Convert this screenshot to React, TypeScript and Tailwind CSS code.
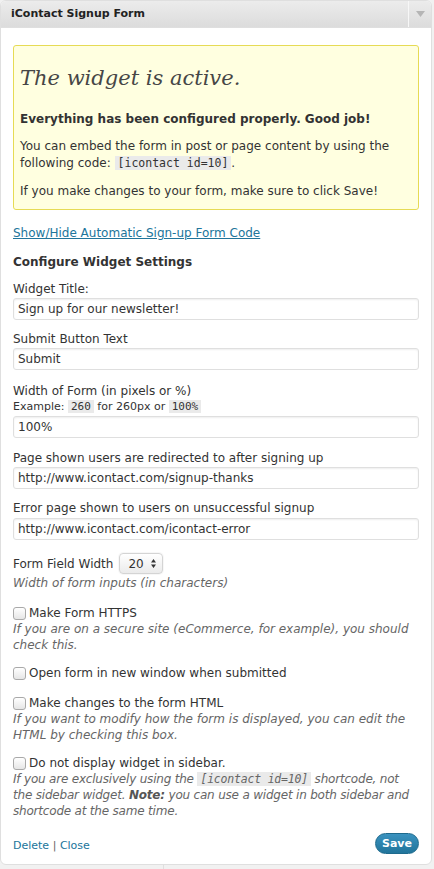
const fields = [
  { label: 'Widget Title:', value: 'Sign up for our newsletter!', mt: 'mt-[11px]' },
  { label: 'Submit Button Text', value: 'Submit', mt: 'mt-[11px]' },
];

function TextInput({ value, className = '' }: { value: string; className?: string }) {
  return (
    <input
      type="text"
      defaultValue={value}
      className={`block h-[22px] w-full rounded-[3px] border border-[#dfdfdf] bg-white px-[4px] text-[12px] text-[#333] shadow-[inset_0_1px_2px_rgba(0,0,0,0.07)] outline-none ${className}`}
    />
  );
}

function Checkbox() {
  return (
    <span className="mr-[3px] inline-block h-[13px] w-[13px] shrink-0 rounded-[3px] border border-[#a9a9a9] bg-gradient-to-b from-white to-[#e6e6e6] shadow-[0_1px_0_rgba(255,255,255,0.8)]" />
  );
}

function Code({ children, className = '' }: { children: React.ReactNode; className?: string }) {
  return (
    <code
      className={`bg-[#eaeaea] px-[3px] font-['DejaVu_Sans_Mono',monospace] text-[11.5px] ${className}`}
    >
      {children}
    </code>
  );
}

export default function App() {
  return (
    <div className="min-h-screen bg-[#f1f1f1] font-['DejaVu_Sans',sans-serif] text-[12px] leading-4 text-[#333]">
      <div className="w-[432px] overflow-hidden rounded-[6px] border border-[#dfdfdf] bg-white">
        {/* title bar */}
        <div className="flex h-[27px] border-b border-[#dfdfdf] bg-gradient-to-b from-[#ececec] to-[#dcdcdc]">
          <div className="flex flex-1 items-center pl-[10px] text-[11px] font-bold text-[#222]">
            iContact Signup Form
          </div>
          <div className="flex w-[23px] items-center justify-center border-l border-[#f7f7f7]">
            <svg width="9" height="6" viewBox="0 0 9 6">
              <path d="M0 0 H9 L4.5 6 Z" fill="#b5b5b5" />
            </svg>
          </div>
        </div>

        <div className="px-3 pb-[10px]">
          {/* notice */}
          <div className="mt-[17px] rounded-[3px] border border-[#e6db55] bg-[#ffffe0] px-[6px] pb-[9px] pt-[16px]">
            <h2 className="font-['DejaVu_Serif',serif] text-[21px] italic leading-[32px] text-[#464646]">
              The widget is active.
            </h2>
            <p className="mt-[17px] font-bold leading-[17px]">
              Everything has been configured properly. Good job!
            </p>
            <p className="mt-[10px] leading-[17px]">
              You can embed the form in post or page content by using the following code:{' '}
              <Code>[icontact id=10]</Code>.
            </p>
            <p className="mt-[11px] leading-[17px]">
              If you make changes to your form, make sure to click Save!
            </p>
          </div>

          <a href="#" className="mt-[15px] block text-[#21759b] underline">
            Show/Hide Automatic Sign-up Form Code
          </a>
          <h3 className="mt-[13px] font-bold">Configure Widget Settings</h3>

          {fields.map((f) => (
            <div key={f.label} className={f.mt}>
              <label className="block">{f.label}</label>
              <TextInput value={f.value} className="mt-px" />
            </div>
          ))}

          <div className="mt-[13px]">
            <label className="block">Width of Form (in pixels or %)</label>
            <div className="text-[11px]">
              Example: <Code className="text-[11px]">260</Code> for 260px or{' '}
              <Code className="text-[11px]">100%</Code>
            </div>
            <TextInput value="100%" className="mt-px" />
          </div>

          <div className="mt-[12px]">
            <label className="block">Page shown users are redirected to after signing up</label>
            <TextInput value="http://www.icontact.com/signup-thanks" className="mt-px" />
          </div>

          <div className="mt-[11px]">
            <label className="block">Error page shown to users on unsuccessful signup</label>
            <TextInput value="http://www.icontact.com/icontact-error" className="mt-[2px]" />
          </div>

          <div className="mt-[13px] flex h-[21px] items-center">
            <span>Form Field Width</span>
            <div className="ml-[6px] flex h-[21px] w-[44px] items-center justify-between rounded-[4px] border border-[#d4d4d4] bg-gradient-to-b from-white to-[#ebebeb] pl-[8px] pr-[6px] shadow-[0_0_0_1px_rgba(0,0,0,0.03)]">
              <span>20</span>
              <svg width="5" height="9" viewBox="0 0 5 9">
                <path d="M0 3.5 L2.5 0 L5 3.5 Z M0 5.5 L2.5 9 L5 5.5 Z" fill="#333" />
              </svg>
            </div>
          </div>
          <p className="mt-px italic text-[#666]">Width of form inputs (in characters)</p>

          <label className="mt-[14px] flex items-center">
            <Checkbox />
            Make Form HTTPS
          </label>
          <p className="italic text-[#666]">
            If you are on a secure site (eCommerce, for example), you should check this.
          </p>

          <label className="mt-[12px] flex items-center">
            <Checkbox />
            Open form in new window when submitted
          </label>

          <label className="mt-[14px] flex items-center">
            <Checkbox />
            Make changes to the form HTML
          </label>
          <p className="italic text-[#666]">
            If you want to modify how the form is displayed, you can edit the HTML by checking this box.
          </p>

          <label className="mt-[12px] flex items-center">
            <Checkbox />
            Do not display widget in sidebar.
          </label>
          <p className="italic tracking-[-0.2px] text-[#666]">
            If you are exclusively using the <Code className="italic">[icontact id=10]</Code> shortcode,
            not the sidebar widget. <strong className="text-[#555]">Note:</strong> you can use a widget in
            both sidebar and shortcode at the same time.
          </p>

          <div className="mt-[14px] flex h-[21px] items-center justify-between">
            <div className="pt-[4px] text-[11px]">
              <a href="#" className="text-[#21759b]">
                Delete
              </a>{' '}
              <span className="text-[#666]">|</span>{' '}
              <a href="#" className="text-[#21759b]">
                Close
              </a>
            </div>
            <button className="h-[21px] w-[44px] rounded-full border border-[#1e6a8d] bg-gradient-to-b from-[#3a92bf] to-[#21759b] text-[11px] font-bold text-white">
              Save
            </button>
          </div>
        </div>
      </div>
      <div className="ml-[163px] h-[4px] border-l border-[#dfdfdf]" />
    </div>
  );
}
